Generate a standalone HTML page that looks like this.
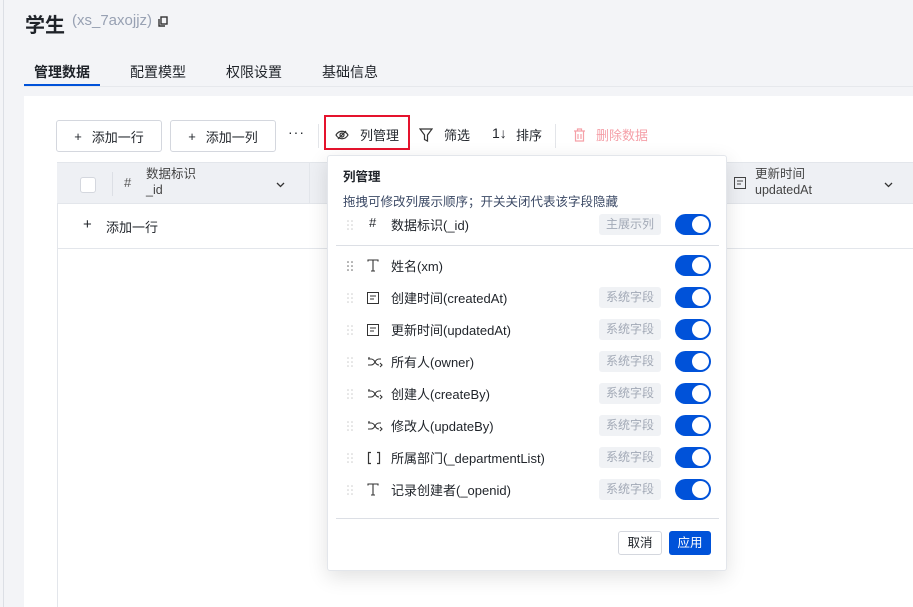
<!DOCTYPE html>
<html><head><meta charset="utf-8"><style>
*{box-sizing:border-box;margin:0;padding:0}
body{width:913px;height:607px;overflow:hidden;background:#f3f4f7;font-family:"Liberation Sans","Noto Sans CJK SC",sans-serif;color:#1f2329;position:relative;font-size:13px}
.abs{position:absolute}
.btn{position:absolute;top:120px;height:32px;border:1px solid #d4d7de;border-radius:3px;background:#fff;font-size:13px;display:flex;align-items:center;justify-content:center;gap:10px}
.row{position:absolute;left:0;width:400px;height:24px;font-size:13px}
.drag{position:absolute;left:20px;top:7px}
.ic{position:absolute;left:40px;top:5px}
.lbl{position:absolute;left:64px;top:2px}
.tag{position:absolute;left:272px;top:1px;width:62px;height:21px;background:#f0f2f5;color:#a2a9b6;font-size:12px;border-radius:3px;text-align:center;line-height:21px}
.sw{position:absolute;left:348px;top:1px;width:36px;height:21px;background:#0052d9;border-radius:11px}
.sw:after{content:"";position:absolute;right:2px;top:2px;width:17px;height:17px;border-radius:50%;background:#fff}
</style></head><body>
<div class="abs" style="left:3px;top:0;width:1px;height:607px;background:#dcdfe5"></div>
<div class="abs" style="left:25px;top:9px;font-size:20px;font-weight:bold">学生</div>
<div class="abs" style="left:72px;top:12px;font-size:15px;color:#98a1b3">(xs_7axojjz)</div>
<svg class="abs" style="left:158px;top:16px" width="10" height="11" viewBox="0 0 10 11"><rect x="3" y="1" width="6" height="7" fill="none" stroke="#333" stroke-width="1.4"/><path d="M1 3v7h6" fill="none" stroke="#333" stroke-width="1.4"/></svg>
<div class="abs" style="left:34px;top:62px;font-size:14px;font-weight:bold">管理数据</div>
<div class="abs" style="left:130px;top:62px;font-size:14px">配置模型</div>
<div class="abs" style="left:226px;top:62px;font-size:14px">权限设置</div>
<div class="abs" style="left:322px;top:62px;font-size:14px">基础信息</div>
<div class="abs" style="left:24px;top:86px;width:889px;height:1px;background:#e6e8ec"></div>
<div class="abs" style="left:24px;top:84px;width:76px;height:2px;background:#0052d9"></div>
<div class="abs" style="left:24px;top:96px;width:889px;height:511px;background:#fff"></div>
<div class="btn" style="left:56px;width:106px">+<span>添加一行</span></div>
<div class="btn" style="left:170px;width:106px">+<span>添加一列</span></div>
<div class="abs" style="left:288px;top:124px;font-size:14px;letter-spacing:1px">···</div>
<div class="abs" style="left:318px;top:124px;width:1px;height:24px;background:#e3e5e9"></div>
<div class="abs" style="left:324px;top:115px;width:86px;height:35px;border:2px solid #e5132d"></div>
<svg class="abs" style="left:335px;top:129px" width="14" height="12" viewBox="0 0 14 12"><path d="M1 6c3-5 9-5 12 0c-3 5-9 5-12 0z" fill="none" stroke="#333" stroke-width="1.2"/><circle cx="7" cy="6" r="2" fill="none" stroke="#333" stroke-width="1.2"/><path d="M3 10L11 2" stroke="#333" stroke-width="1.2"/></svg>
<div class="abs" style="left:360px;top:125px">列管理</div>
<svg class="abs" style="left:419px;top:128px" width="14" height="14" viewBox="0 0 14 14"><path d="M1 1h12L8.5 7v6l-3-1.5V7z" fill="none" stroke="#333" stroke-width="1.2"/></svg>
<div class="abs" style="left:444px;top:125px">筛选</div>
<div class="abs" style="left:492px;top:125px;font-size:14px">1↓</div>
<div class="abs" style="left:516px;top:125px">排序</div>
<div class="abs" style="left:555px;top:124px;width:1px;height:24px;background:#e3e5e9"></div>
<svg class="abs" style="left:573px;top:128px" width="13" height="14" viewBox="0 0 13 14"><path d="M1 3h11M4.5 3V1h4v2M2.5 3v10h8V3M5 6v5M8 6v5" fill="none" stroke="#f5a0a8" stroke-width="1.2"/></svg>
<div class="abs" style="left:596px;top:125px;color:#f5a0a8">删除数据</div>
<!-- table -->
<div class="abs" style="left:57px;top:162px;width:856px;height:445px;border-left:1px solid #e3e6eb"></div>
<div class="abs" style="left:57px;top:162px;width:856px;height:42px;background:#eef0f4;border-top:1px solid #e3e6eb;border-bottom:1px solid #e3e6eb"></div>
<div class="abs" style="left:80px;top:177px;width:16px;height:16px;background:#fff;border:1px solid #d4d7de;border-radius:3px"></div>
<div class="abs" style="left:112px;top:172px;width:1px;height:24px;background:#dcdfe5"></div>
<div class="abs" style="left:124px;top:175px;color:#555">#</div>
<div class="abs" style="left:146px;top:166px;color:#444;line-height:16px;font-size:12.5px">数据标识<br>_id</div>
<svg class="abs" style="left:276px;top:182px" width="9" height="6" viewBox="0 0 9 6"><path d="M1 1l3.5 3.5L8 1" fill="none" stroke="#333" stroke-width="1.3"/></svg>
<div class="abs" style="left:309px;top:162px;width:1px;height:42px;background:#e3e6eb"></div>
<svg class="abs" style="left:734px;top:177px" width="12" height="12" viewBox="0 0 12 12"><rect x=".5" y=".5" width="11" height="11" fill="none" stroke="#444"/><path d="M3 4h6M3 7h4" stroke="#444"/></svg>
<div class="abs" style="left:755px;top:166px;color:#444;line-height:16px;font-size:12.5px">更新时间<br>updatedAt</div>
<svg class="abs" style="left:884px;top:182px" width="9" height="6" viewBox="0 0 9 6"><path d="M1 1l3.5 3.5L8 1" fill="none" stroke="#333" stroke-width="1.3"/></svg>
<div class="abs" style="left:57px;top:248px;width:856px;height:1px;background:#e3e6eb"></div>
<div class="abs" style="left:83px;top:216px;font-size:15px">+</div>
<div class="abs" style="left:106px;top:217px">添加一行</div>
<!-- popup -->
<div class="abs" style="left:327px;top:155px;width:400px;height:416px;background:#fff;border:1px solid #e3e6eb;border-radius:3px;box-shadow:0 6px 20px rgba(0,0,0,.12)">
<div class="abs" style="left:15px;top:10px;font-weight:bold;font-size:12.5px">列管理</div>
<div class="abs" style="left:15px;top:35px;color:#3c4a66;font-size:12.5px">拖拽可修改列展示顺序；开关关闭代表该字段隐藏</div>
<div class="abs" style="left:8px;top:89px;width:383px;height:1px;background:#dcdfe5"></div>
<div class="abs" style="left:8px;top:362px;width:383px;height:1px;background:#dcdfe5"></div>
<div class="abs" style="left:290px;top:375px;width:44px;height:24px;border:1px solid #d4d7de;border-radius:3px;text-align:center;line-height:22px;font-size:12.5px">取消</div>
<div class="abs" style="left:341px;top:375px;width:42px;height:24px;background:#0052d9;color:#fff;border-radius:3px;text-align:center;line-height:24px;font-size:12.5px">应用</div>
</div>
<div class="abs" style="left:327px;top:155px;width:400px;height:416px">
<svg width="0" height="0" style="position:absolute"><defs>
<g id="dr"><circle cx="1" cy="1" r=".8"/><circle cx="5" cy="1" r=".8"/><circle cx="1" cy="5" r=".8"/><circle cx="5" cy="5" r=".8"/><circle cx="1" cy="9" r=".8"/><circle cx="5" cy="9" r=".8"/></g>
<g id="tt"><path d="M1 2.5V1h10v1.5M6 1v11M4 12h4" fill="none" stroke="#333" stroke-width="1.1"/></g>
<g id="dc"><rect x=".5" y=".5" width="11" height="11" fill="none" stroke="#333"/><path d="M3 4h6M3 7h4" stroke="#333"/></g>
<g id="us"><path d="M1 3h3c2 0 3 1 4 3s2 3 4 3M1 9h3c2 0 3-1 4-3s2-3 4-3h2M2 1v2M13 7l2 2l-2 2" fill="none" stroke="#333" stroke-width="1.1"/></g>
</defs></svg>
<div class="row" style="top:58px"><svg class="drag" width="6" height="11"><use href="#dr" fill="#ccc"/></svg><span class="ic" style="top:2px;left:42px">#</span><span class="lbl">数据标识(_id)</span><span class="tag">主展示列</span><span class="sw"></span></div>
<div class="row" style="top:99px"><svg class="drag" width="6" height="11"><use href="#dr" fill="#666"/></svg><svg class="ic" width="12" height="13"><use href="#tt"/></svg><span class="lbl">姓名(xm)</span><span class="sw"></span></div>
<div class="row" style="top:131px"><svg class="drag" width="6" height="11"><use href="#dr" fill="#ccc"/></svg><svg class="ic" style="top:6px" width="12" height="12"><use href="#dc"/></svg><span class="lbl">创建时间(createdAt)</span><span class="tag">系统字段</span><span class="sw"></span></div>
<div class="row" style="top:163px"><svg class="drag" width="6" height="11"><use href="#dr" fill="#ccc"/></svg><svg class="ic" style="top:6px" width="12" height="12"><use href="#dc"/></svg><span class="lbl">更新时间(updatedAt)</span><span class="tag">系统字段</span><span class="sw"></span></div>
<div class="row" style="top:195px"><svg class="drag" width="6" height="11"><use href="#dr" fill="#ccc"/></svg><svg class="ic" style="top:6px" width="16" height="12"><use href="#us"/></svg><span class="lbl">所有人(owner)</span><span class="tag">系统字段</span><span class="sw"></span></div>
<div class="row" style="top:227px"><svg class="drag" width="6" height="11"><use href="#dr" fill="#ccc"/></svg><svg class="ic" style="top:6px" width="16" height="12"><use href="#us"/></svg><span class="lbl">创建人(createBy)</span><span class="tag">系统字段</span><span class="sw"></span></div>
<div class="row" style="top:259px"><svg class="drag" width="6" height="11"><use href="#dr" fill="#ccc"/></svg><svg class="ic" style="top:6px" width="16" height="12"><use href="#us"/></svg><span class="lbl">修改人(updateBy)</span><span class="tag">系统字段</span><span class="sw"></span></div>
<div class="row" style="top:291px"><svg class="drag" width="6" height="11"><use href="#dr" fill="#ccc"/></svg><svg class="ic" style="top:5px" width="14" height="14" viewBox="0 0 14 14"><path d="M4 1.5H1.5v11H4M10 1.5h2.5v11H10" fill="none" stroke="#333" stroke-width="1.2"/></svg><span class="lbl">所属部门(_departmentList)</span><span class="tag">系统字段</span><span class="sw"></span></div>
<div class="row" style="top:323px"><svg class="drag" width="6" height="11"><use href="#dr" fill="#ccc"/></svg><svg class="ic" width="12" height="13"><use href="#tt"/></svg><span class="lbl">记录创建者(_openid)</span><span class="tag">系统字段</span><span class="sw"></span></div>
</div>
</body></html>
